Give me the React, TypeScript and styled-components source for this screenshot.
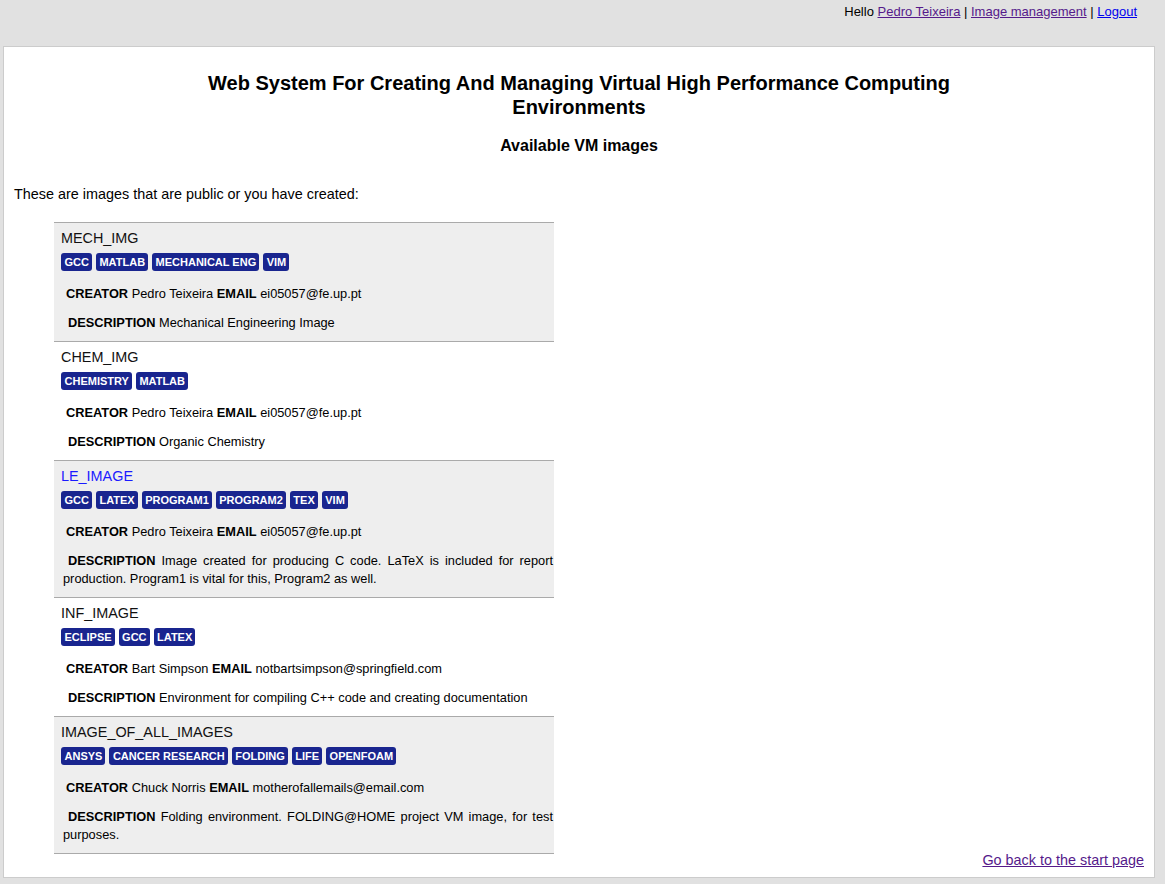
import React from "react";
import styled, { createGlobalStyle } from "styled-components";

const Global = createGlobalStyle`
  html, body { margin: 0; padding: 0; background: #e1e1e1; }
  body { font-family: "Liberation Sans", Arial, sans-serif; font-size: 13px; color: #000; }
  a { color: #551a8b; }
`;

const TopBar = styled.div`
  display: flex;
  justify-content: flex-end;
  padding: 4px 28px 0 0;
  height: 46px;
  box-sizing: border-box;
  font-size: 13px;
  line-height: 16px;
`;

const NavLink = styled.a<{ $fresh?: boolean }>`
  color: ${(p) => (p.$fresh ? "#0000ee" : "#551a8b")};
`;

const Panel = styled.main`
  margin: 0 10px 0 3px;
  background: #fff;
  border: 1px solid #cccccc;
  padding: 10px 10px 9px 10px;
`;

const Title = styled.h1`
  width: 760px;
  margin: 14px auto 0;
  text-align: center;
  font-size: 20px;
  line-height: 24px;
  font-weight: bold;
`;

const Subtitle = styled.h2`
  margin: 17px 0 0;
  text-align: center;
  font-size: 16px;
  line-height: 20px;
  font-weight: bold;
`;

const Intro = styled.p`
  margin: 29px 0 0;
  font-size: 14.4px;
  line-height: 18px;
`;

const List = styled.ul`
  list-style: none;
  margin: 19px 0 0;
  padding: 0 0 0 40px;
`;

const Item = styled.li<{ $shade: boolean }>`
  width: 500px;
  box-sizing: border-box;
  background: ${(p) => (p.$shade ? "#eeeeee" : "#ffffff")};
  border-top: 1px solid #aaaaaa;
  padding: 6px 1px 9px 7px;
  &:last-child { border-bottom: 1px solid #aaaaaa; }
`;

const ItemName = styled.div<{ $active?: boolean }>`
  font-size: 14.4px;
  line-height: 18px;
  color: ${(p) => (p.$active ? "#1a1aff" : "#111")};
`;

const Tags = styled.div`
  display: flex;
  gap: 4px;
  margin-top: 6px;
`;

const Tag = styled.span`
  background: #19258f;
  color: #fff;
  font-size: 11px;
  font-weight: bold;
  line-height: 18px;
  height: 18px;
  padding: 0 3px 0 3.5px;
  border-radius: 3px;
`;

const Field = styled.div`
  font-size: 12.8px;
  line-height: 18px;
  margin-top: 14px;
  padding-left: 5px;
`;

const Desc = styled.div`
  font-size: 12.8px;
  line-height: 18px;
  margin-top: 11px;
  padding-left: 2px;
  text-align: justify;
`;

const Label = styled.b`
  margin-left: 5px;
`;

const Footer = styled.div`
  display: flex;
  justify-content: flex-end;
  font-size: 14.4px;
  line-height: 16px;
  margin-top: -2px;
`;

type Img = { name: string; tags: string[]; creator: string; email: string; desc: string; active?: boolean };

const images: Img[] = [
  { name: "MECH_IMG", tags: ["GCC", "MATLAB", "MECHANICAL ENG", "VIM"], creator: "Pedro Teixeira", email: "ei05057@fe.up.pt", desc: "Mechanical Engineering Image" },
  { name: "CHEM_IMG", tags: ["CHEMISTRY", "MATLAB"], creator: "Pedro Teixeira", email: "ei05057@fe.up.pt", desc: "Organic Chemistry" },
  { name: "LE_IMAGE", active: true, tags: ["GCC", "LATEX", "PROGRAM1", "PROGRAM2", "TEX", "VIM"], creator: "Pedro Teixeira", email: "ei05057@fe.up.pt", desc: "Image created for producing C code. LaTeX is included for report production. Program1 is vital for this, Program2 as well." },
  { name: "INF_IMAGE", tags: ["ECLIPSE", "GCC", "LATEX"], creator: "Bart Simpson", email: "notbartsimpson@springfield.com", desc: "Environment for compiling C++ code and creating documentation" },
  { name: "IMAGE_OF_ALL_IMAGES", tags: ["ANSYS", "CANCER RESEARCH", "FOLDING", "LIFE", "OPENFOAM"], creator: "Chuck Norris", email: "motherofallemails@email.com", desc: "Folding environment. FOLDING@HOME project VM image, for test purposes." },
];

export default function App() {
  return (
    <>
      <Global />
      <TopBar>
        <span>
          Hello <NavLink href="#">Pedro Teixeira</NavLink> | <NavLink href="#">Image management</NavLink> |{" "}
          <NavLink href="#" $fresh>Logout</NavLink>
        </span>
      </TopBar>
      <Panel>
        <Title>Web System For Creating And Managing Virtual High Performance Computing Environments</Title>
        <Subtitle>Available VM images</Subtitle>
        <Intro>These are images that are public or you have created:</Intro>
        <List>
          {images.map((img, i) => (
            <Item key={img.name} $shade={i % 2 === 0}>
              <ItemName $active={img.active}>{img.name}</ItemName>
              <Tags>
                {img.tags.map((t) => (
                  <Tag key={t}>{t}</Tag>
                ))}
              </Tags>
              <Field>
                <b>CREATOR</b> {img.creator} <b>EMAIL</b> {img.email}
              </Field>
              <Desc>
                <Label>DESCRIPTION</Label> {img.desc}
              </Desc>
            </Item>
          ))}
        </List>
        <Footer>
          <a href="#">Go back to the start page</a>
        </Footer>
      </Panel>
    </>
  );
}
